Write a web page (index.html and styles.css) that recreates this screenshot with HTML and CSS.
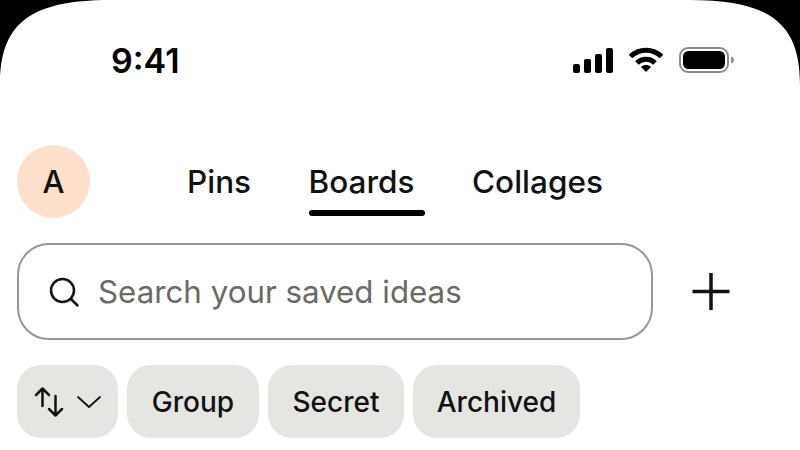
FILE: index.html
```html
<!DOCTYPE html>
<html lang="en">
<head>
    <meta charset="UTF-8">
    <title>Saved</title>
    <link rel="stylesheet" href="styles.css">
</head>
<body>
    <div class="phone">
        <!-- screen corners -->
        <svg class="corner corner-left" width="110" height="85" viewBox="0 0 110 85" fill="#000">
            <path d="M0 0H110C28 0 0 25 0 85z"/>
        </svg>
        <svg class="corner corner-right" width="110" height="85" viewBox="0 0 110 85" fill="#000">
            <path d="M0 0H110C28 0 0 25 0 85z"/>
        </svg>

        <div class="status-bar">
            <span class="time">9:41</span>
            <div class="status-icons">
                <svg width="40" height="25" viewBox="0 0 40 25" fill="#000">
                    <rect x="0" y="16" width="7" height="9" rx="2"/>
                    <rect x="11" y="11" width="7" height="14" rx="2"/>
                    <rect x="22" y="6" width="7" height="19" rx="2"/>
                    <rect x="33" y="0" width="7" height="25" rx="2"/>
                </svg>
                <svg width="36" height="26" viewBox="0 0 36 26" fill="none" stroke="#000" stroke-width="5">
                    <path d="M2.5 9.5C11 1 25 1 33.500 9.500"/>
                    <path d="M9 16C14 11 22 11 27 16"/>
                    <path d="M18 25l-5-5c3-2.600 7-2.600 10 0z" fill="#000" stroke="none"/>
                </svg>
                <svg width="56" height="26" viewBox="0 0 56 26" fill="none">
                    <rect x="1" y="1" width="48" height="24" rx="8" stroke="#000" stroke-opacity=".45" stroke-width="2"/>
                    <rect x="4" y="4" width="42" height="18" rx="5.500" fill="#000"/>
                    <path d="M52 9.500c2 .6 3 2 3 3.500s-1 2.900-3 3.500z" fill="#000" fill-opacity=".45"/>
                </svg>
            </div>
        </div>

        <div class="tabs-row">
            <div class="avatar">A</div>
            <div class="tabs">
                <span class="tab">Pins</span>
                <span class="tab tab-active">Boards</span>
                <span class="tab">Collages</span>
            </div>
        </div>

        <div class="search-row">
            <div class="search-box">
                <svg width="32" height="32" viewBox="0 0 32 32" fill="none" stroke="#111" stroke-width="2.500" stroke-linecap="round">
                    <circle cx="14.500" cy="14.500" r="11.500"/>
                    <path d="M23 23l6.500 6.500"/>
                </svg>
                <span class="search-text">Search your saved ideas</span>
            </div>
            <svg class="plus" width="40" height="40" viewBox="0 0 40 40" stroke="#111" stroke-width="3.500">
                <path d="M20 1v37M1.500 19.500h37"/>
            </svg>
        </div>

        <div class="chips">
            <div class="chip chip-sort">
                <svg width="32" height="32" viewBox="0 0 32 32" fill="none" stroke="#111" stroke-width="2.500" stroke-linecap="round" stroke-linejoin="round">
                    <path d="M9.500 20V3M3 9l6.500-6.500L16 9"/>
                    <path d="M22.500 10v19M16 23l6.500 6.500L29 23"/>
                </svg>
                <svg width="26" height="14" viewBox="0 0 26 14" fill="none" stroke="#111" stroke-width="1.800" stroke-linecap="round" stroke-linejoin="round">
                    <path d="M2 2l11 10L24 2"/>
                </svg>
            </div>
            <span class="chip">Group</span>
            <span class="chip">Secret</span>
            <span class="chip">Archived</span>
        </div>
    </div>
</body>
</html>
```
FILE: styles.css
```css
body {
    margin: 0;
    width: 800px;
    height: 450px;
    overflow: hidden;
    background-color: #fff;
    font-family: Inter, "Liberation Sans", sans-serif;
    color: #111;
}
.phone {
    position: relative;
    height: 450px;
    box-sizing: border-box;
    padding: 0 17px;
}
.corner {
    position: absolute;
    top: 0;
}
.corner-left {
    left: 0;
}
.corner-right {
    right: 0;
    transform: scaleX(-1);
}
.status-bar {
    display: flex;
    justify-content: space-between;
    align-items: center;
    height: 120px;
    padding: 0 48px 0 94px;
}
.time {
    font-size: 34px;
    font-weight: 600;
    color: #000;
}
.status-icons {
    display: flex;
    align-items: center;
    gap: 15px;
}
.tabs-row {
    display: flex;
    align-items: center;
    height: 74px;
    margin-top: 24px;
}
.avatar {
    width: 73px;
    height: 73px;
    border-radius: 50%;
    background-color: #fddfcc;
    display: flex;
    align-items: center;
    justify-content: center;
    font-size: 31px;
    font-weight: 500;
}
.tabs {
    display: flex;
    gap: 57.5px;
    margin-left: 97px;
}
.tab {
    position: relative;
    font-size: 31.5px;
    font-weight: 500;
}
.tab-active::after {
    content: "";
    position: absolute;
    left: 0;
    right: -10px;
    bottom: -15px;
    height: 6px;
    border-radius: 3px;
    background-color: #000;
}
.search-row {
    display: flex;
    align-items: center;
    margin-top: 25px;
}
.search-box {
    width: 636px;
    height: 97px;
    box-sizing: border-box;
    border: 2px solid #999793;
    border-radius: 32px;
    display: flex;
    align-items: center;
    gap: 18px;
    padding-left: 29px;
}
.search-text {
    font-size: 31.3px;
    color: #6b6a65;
}
.plus {
    margin-left: 38px;
}
.chips {
    display: grid;
    grid-template-columns: 101px 132px 136px 167px;
    gap: 9px;
    margin-top: 25px;
}
.chip {
    height: 73px;
    border-radius: 24px;
    background-color: #e5e5e1;
    display: flex;
    align-items: center;
    justify-content: center;
    font-size: 28px;
    font-weight: 500;
}
.chip-sort {
    justify-content: flex-start;
    padding-left: 16px;
    gap: 11px;
}
```
